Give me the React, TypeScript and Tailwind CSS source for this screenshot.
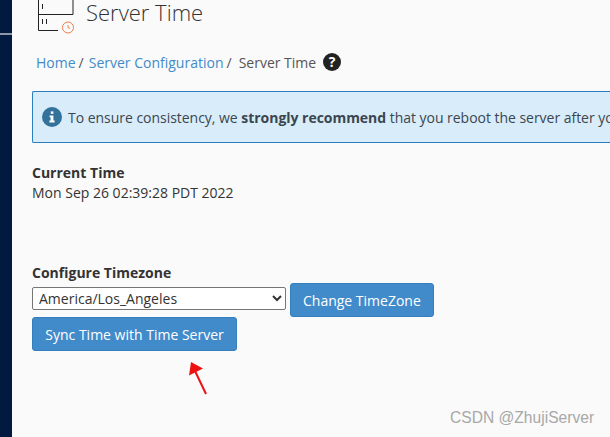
export default function App() {
  return (
    <div className="relative flex h-[437px] w-[610px] overflow-hidden bg-[#fafafa] font-['Open_Sans',sans-serif] text-[14px] text-[#333]">
      {/* Sidebar */}
      <div className="w-3 shrink-0 bg-[#031a40] pt-[33px]">
        <div className="h-[2px] bg-[#8d97aa]" />
      </div>

      <div className="min-w-0 flex-1 pl-5">
        {/* Page header */}
        <div className="flex h-[34px] items-start pl-[6px]">
          <svg width="36" height="34" viewBox="0 0 36 34" fill="none" className="shrink-0">
            <path d="M0.5 0V30.5H20M0.5 14.5H35V0" stroke="#222" strokeWidth="1" />
            <path d="M4.5 4V9M4.5 19V24M8.5 19V24" stroke="#222" strokeWidth="1" />
            <circle cx="30" cy="27.5" r="5.5" stroke="#f47a4c" strokeWidth="1" />
            <path d="M30 25V27.5L32 28.5" stroke="#f47a4c" strokeWidth="1" />
          </svg>
          <h1 className="ml-[12px] text-[22px] leading-[25px] font-light text-[#333]">Server Time</h1>
        </div>

        {/* Breadcrumb */}
        <div className="mt-[17px] flex h-[22px] items-center pl-[4px]">
          <a className="text-[#428bca]">Home</a>
          <span className="ml-[3px] text-[#555]">/</span>
          <a className="ml-[5px] text-[#428bca]">Server Configuration</a>
          <span className="ml-[3px] text-[#555]">/</span>
          <span className="ml-[7px] text-[#555]">Server Time</span>
          <svg width="18" height="18" viewBox="0 0 18 18" className="ml-[7px]">
            <circle cx="9" cy="9" r="9" fill="#222" />
            <text x="9" y="14" textAnchor="middle" fontSize="14" fontWeight="700" fill="#fff">?</text>
          </svg>
        </div>

        {/* Alert */}
        <div className="mt-[18px] flex h-[52px] w-[640px] items-center whitespace-nowrap rounded-l-[2px] border border-r-0 border-[#2a7fc1] bg-[#d8ecf9] pl-[9px] text-[#3b4650]">
          <svg width="20" height="20" viewBox="0 0 20 20" className="shrink-0">
            <circle cx="10" cy="10" r="10" fill="#33729a" />
            <rect x="8.8" y="4.4" width="2.6" height="2.4" fill="#fff" />
            <path d="M7.6 8.4H11.4V13.6H12.6V15.4H7.4V13.6H8.6V10.2H7.6Z" fill="#fff" />
          </svg>
          <span className="ml-[6px] tracking-[-0.03px]">
            To ensure consistency, we <strong className="font-bold">strongly recommend</strong> that you reboot the server after your change.
          </span>
        </div>

        {/* Current time */}
        <div className="mt-[20px] leading-[20px]">
          <div className="font-bold">Current Time</div>
          <div>Mon Sep 26 02:39:28 PDT 2022</div>
        </div>

        {/* Timezone form */}
        <div className="mt-[60px] leading-[20px] font-bold">Configure Timezone</div>
        <div className="flex items-start gap-[4px]">
          <select className="mt-[4px] h-[23px] w-[254px] rounded-[2px] border border-[#767676] bg-white pl-[2px] text-[14px] text-[#333]">
            <option>America/Los_Angeles</option>
          </select>
          <button className="h-[34px] rounded-[3px] border border-[#357ebd] bg-[#428bca] px-3 text-[14px] text-white">
            Change TimeZone
          </button>
        </div>
        <button className="block h-[34px] w-[205px] rounded-[3px] border border-[#357ebd] bg-[#428bca] text-[14px] text-white">
          Sync Time with Time Server
        </button>
      </div>

      {/* Red annotation arrow */}
      <svg width="24" height="36" viewBox="0 0 24 36" className="absolute left-[186px] top-[360px]" fill="none">
        <path d="M20 34L9 11" stroke="#ee1111" strokeWidth="2" />
        <path d="M5 2L3 15.5L17 8.5Z" fill="#ee1111" />
      </svg>

      {/* Watermark */}
      <div className="absolute left-[450px] top-[409px] font-['Liberation_Sans',sans-serif] text-[15.6px] leading-[18px] text-[#a8a8a8]">
        CSDN @ZhujiServer
      </div>
    </div>
  );
}
